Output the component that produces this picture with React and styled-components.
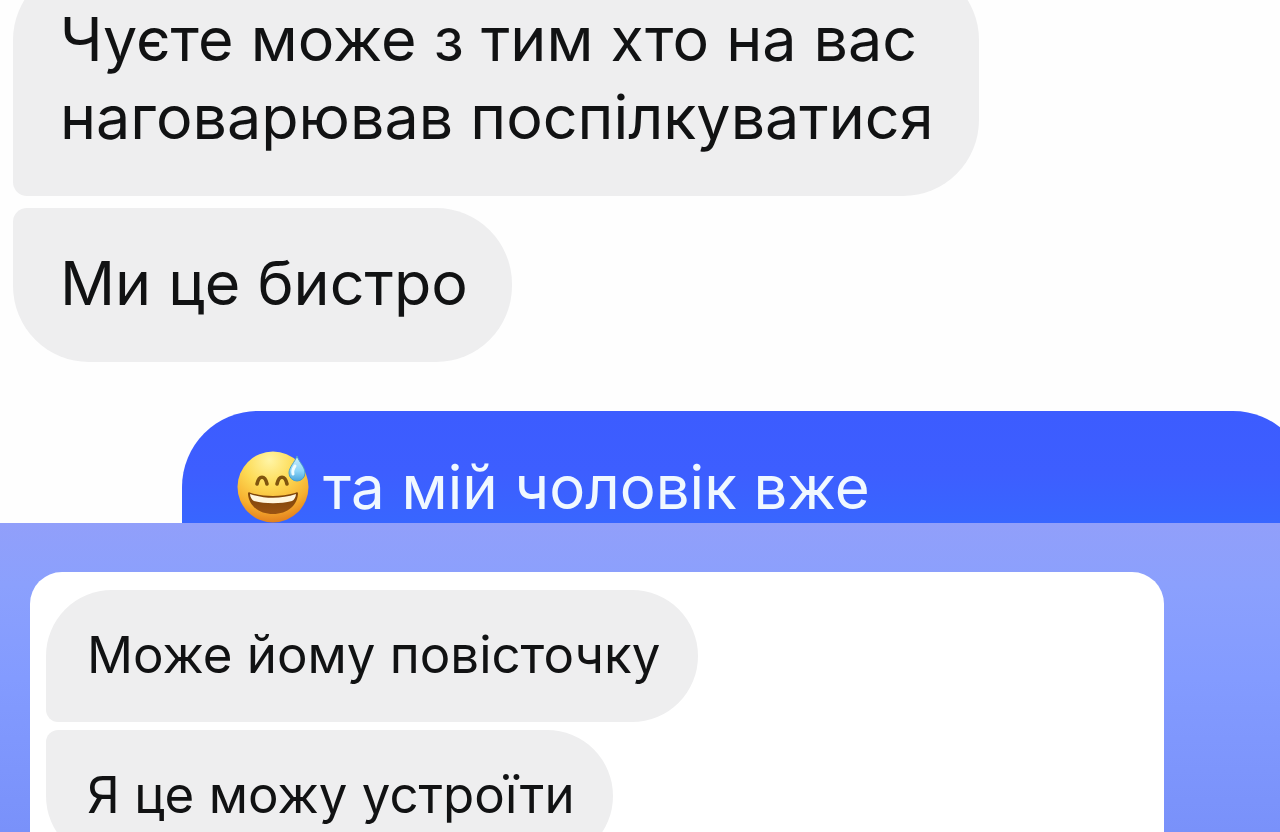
import React from 'react';
import styled, { createGlobalStyle } from 'styled-components'

const GlobalStyle = createGlobalStyle`
  * {
    box-sizing: border-box;
  }
  body {
    margin: 0;
    background: #fefefe;
    font-family: Inter, "Liberation Sans", sans-serif;
    overflow: hidden;
  }
`

const Page = styled.main`
  display: flex;
  flex-direction: column;
  min-height: 100vh;
`

// the first message is already scrolled partly out of view
const Chat = styled.section`
  display: flex;
  flex-direction: column;
  align-items: flex-start;
  gap: 12px;
  margin-top: -36px;
  padding-left: 13px;
`

const Bubble = styled.p`
  margin: 0;
  width: fit-content;
  max-width: 966px;
  padding: 36px 44px 40px 47px;
  border-radius: 76px;
  border-top-left-radius: ${props => props.$joinTop ? "14px" : "76px"};
  border-bottom-left-radius: ${props => props.$joinBottom ? "14px" : "76px"};
  background: #eeeeef;
  color: #111213;
  font-size: 61px;
  line-height: 78px;
`

const SmallBubble = styled(Bubble)`
  padding: 32px 38px 34px 41px;
  font-size: 51px;
  line-height: 66px;
`

const Reply = styled.p`
  display: flex;
  align-items: center;
  gap: 13px;
  align-self: stretch;
  margin: 37px -29px 0 169px;
  padding: 40px 54px 0;
  border-radius: 76px 76px 0 0;
  background: linear-gradient(#3c5cff 0%, #3d5eff 55%, #3866ff 100%);
  color: #f0f8ff;
  font-size: 60px;
  line-height: 72px;
`

const Emoji = styled.svg`
  flex: none;
  width: 74px;
  height: 72px;
`

const Backdrop = styled.section`
  flex: 1 0 0;
  display: flex;
  padding: 49px 116px 0 30px;
  background: linear-gradient(#919ffa 0%, #8ba0fd 20%, #839bff 50%, #7991fa 100%);
`

const Card = styled.div`
  flex: 1;
  display: flex;
  flex-direction: column;
  gap: 8px;
  height: 260px;
  padding: 18px 16px 0;
  border-radius: 32px 32px 0 0;
  background: #fff;
`

const SweatSmile = () => (
  <Emoji viewBox="0 0 74 72" role="img" aria-label="😅">
    <defs>
      <radialGradient id="face" cx="0.45" cy="0.12" r="0.9">
        <stop offset="0" stopColor="#fff5a6" />
        <stop offset="0.4" stopColor="#fddb55" />
        <stop offset="0.75" stopColor="#f7b02f" />
        <stop offset="1" stopColor="#e07a1c" />
      </radialGradient>
      <linearGradient id="mouth" x1="0" y1="0" x2="0" y2="1">
        <stop offset="0" stopColor="#7c4308" />
        <stop offset="1" stopColor="#9a5312" />
      </linearGradient>
      <linearGradient id="drop" x1="0" y1="0" x2="0" y2="1">
        <stop offset="0" stopColor="#cfefff" />
        <stop offset="0.6" stopColor="#8dd5f8" />
        <stop offset="1" stopColor="#4aa5dc" />
      </linearGradient>
    </defs>
    <circle cx="37" cy="36" r="35.5" fill="url(#face)" />
    <path d="M21 33c2-9 8-9 10 0M41 33c2-9 8-9 10 0" fill="none" stroke="#80550f" strokeWidth="3.6" strokeLinecap="round" />
    <path d="M12 43c0-2 1-2 3-1 14 4 30 4 44 0 2-1 3-1 3 1-1 12-11 20-25 20S13 55 12 43z" fill="url(#mouth)" />
    <path d="M14 43c15 5 31 5 46 0 0 3-2 6-4 7-12 3-26 3-38 0-2-1-4-4-4-7z" fill="#fff6df" />
    <path d="M61 5c2 6 8 11 8 17a8 8 0 0 1-16 0c0-6 6-11 8-17z" fill="url(#drop)" stroke="#489fca" strokeWidth="1" />
    <path d="M59 15c-2 3-3 5-2 8" fill="none" stroke="#f1fcff" strokeWidth="3" strokeLinecap="round" />
  </Emoji>
)

function App() {
  return (
    <Page>
      <GlobalStyle />
      <Chat>
        <Bubble $joinBottom>Чуєте може з тим хто на вас наговарював поспілкуватися</Bubble>
        <Bubble $joinTop>Ми це бистро</Bubble>
        <Reply>
          <SweatSmile />
          <span>та мій чоловік вже</span>
        </Reply>
      </Chat>
      <Backdrop>
        <Card>
          <SmallBubble $joinBottom>Може йому повісточку</SmallBubble>
          <SmallBubble $joinTop>Я це можу устроїти</SmallBubble>
        </Card>
      </Backdrop>
    </Page>
  )
}

export default App;
